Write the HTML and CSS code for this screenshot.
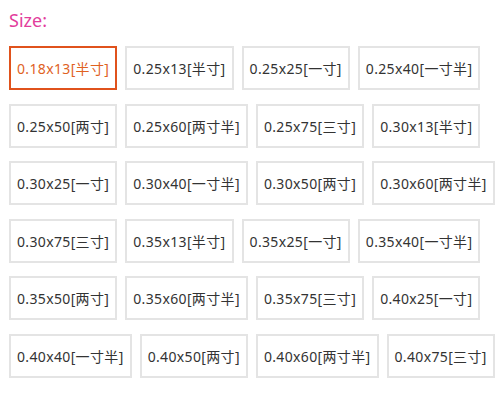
FILE: index.html
```html
<!DOCTYPE html>
<html>
<head>
<meta charset="utf-8">
<link rel="stylesheet" href="styles.css">
</head>
<body>
<div class="size-picker">
  <div class="label">Size:</div>
  <div class="options">
    <span class="opt selected">0.18x13[半寸]</span>
    <span class="opt">0.25x13[半寸]</span>
    <span class="opt">0.25x25[一寸]</span>
    <span class="opt">0.25x40[一寸半]</span>
    <span class="opt">0.25x50[两寸]</span>
    <span class="opt">0.25x60[两寸半]</span>
    <span class="opt">0.25x75[三寸]</span>
    <span class="opt">0.30x13[半寸]</span>
    <span class="opt">0.30x25[一寸]</span>
    <span class="opt">0.30x40[一寸半]</span>
    <span class="opt">0.30x50[两寸]</span>
    <span class="opt">0.30x60[两寸半]</span>
    <span class="opt">0.30x75[三寸]</span>
    <span class="opt">0.35x13[半寸]</span>
    <span class="opt">0.35x25[一寸]</span>
    <span class="opt">0.35x40[一寸半]</span>
    <span class="opt">0.35x50[两寸]</span>
    <span class="opt">0.35x60[两寸半]</span>
    <span class="opt">0.35x75[三寸]</span>
    <span class="opt">0.40x25[一寸]</span>
    <span class="opt">0.40x40[一寸半]</span>
    <span class="opt">0.40x50[两寸]</span>
    <span class="opt">0.40x60[两寸半]</span>
    <span class="opt">0.40x75[三寸]</span>
  </div>
</div>
</body>
</html>
```
FILE: styles.css
```css
html, body {
  margin: 0;
  padding: 0;
  background: #ffffff;
}
body {
  font-family: "Noto Sans", "Noto Sans CJK SC", sans-serif;
}
.size-picker {
  padding: 8px 0 0 9px;
  width: 491px;
}
.label {
  color: #e23d9c;
  font-size: 18px;
  line-height: 24px;
  height: 38px;
}
.options {
  display: flex;
  flex-wrap: wrap;
  column-gap: 8px;
  row-gap: 13.5px;
}
.opt {
  box-sizing: border-box;
  height: 44px;
  display: flex;
  align-items: center;
  padding: 0 6px;
  border: 2px solid #e4e4e4;
  color: #333333;
  font-size: 14px;
  letter-spacing: 0.35px;
  white-space: nowrap;
}
.opt.selected {
  border-color: #e0521c;
  color: #e0621f;
}
```
